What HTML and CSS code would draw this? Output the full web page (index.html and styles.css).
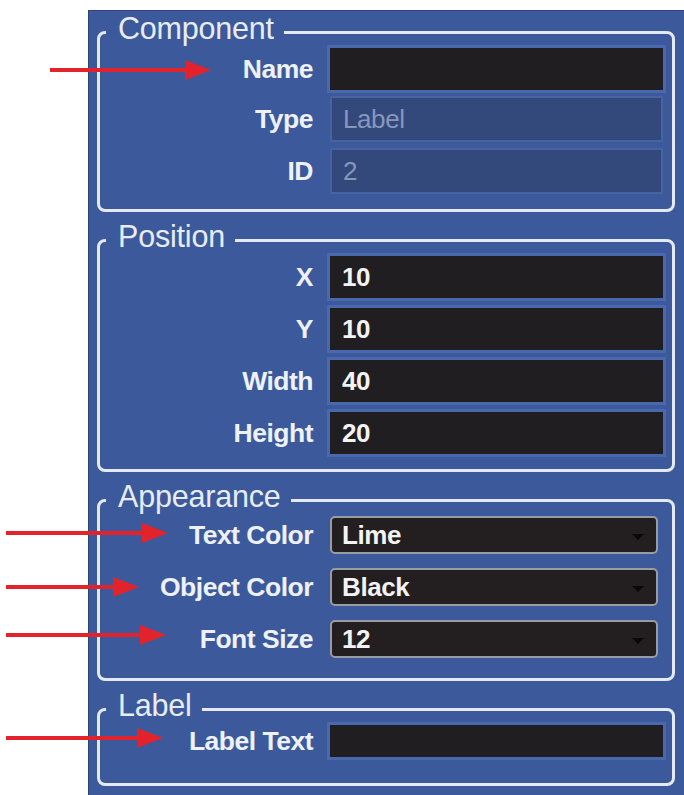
FILE: index.html
```html
<!DOCTYPE html>
<html lang="en">
<head>
    <meta charset="UTF-8">
    <meta name="viewport" content="width=device-width, initial-scale=1.0">
    <title>Properties</title>
    <link rel="stylesheet" href="styles.css">
</head>
<body>
    <div class="props-panel">
        <!-- 组件信息 -->
        <fieldset class="group group-component">
            <legend>Component</legend>
            <div class="field-grid">
                <label class="field-label" for="comp-name">Name</label>
                <input id="comp-name" class="field-input" type="text" value="">
                <label class="field-label" for="comp-type">Type</label>
                <input id="comp-type" class="field-input readonly" type="text" value="Label" readonly>
                <label class="field-label" for="comp-id">ID</label>
                <input id="comp-id" class="field-input readonly" type="text" value="2" readonly>
            </div>
        </fieldset>

        <!-- 位置和尺寸 -->
        <fieldset class="group group-position">
            <legend>Position</legend>
            <div class="field-grid">
                <label class="field-label" for="pos-x">X</label>
                <input id="pos-x" class="field-input" type="text" value="10">
                <label class="field-label" for="pos-y">Y</label>
                <input id="pos-y" class="field-input" type="text" value="10">
                <label class="field-label" for="pos-w">Width</label>
                <input id="pos-w" class="field-input" type="text" value="40">
                <label class="field-label" for="pos-h">Height</label>
                <input id="pos-h" class="field-input" type="text" value="20">
            </div>
        </fieldset>

        <!-- 外观 -->
        <fieldset class="group group-appearance">
            <legend>Appearance</legend>
            <div class="field-grid">
                <label class="field-label" for="text-color">Text Color</label>
                <div class="select-box">
                    <select id="text-color" class="field-select">
                        <option>Lime</option>
                    </select>
                </div>
                <label class="field-label" for="obj-color">Object Color</label>
                <div class="select-box">
                    <select id="obj-color" class="field-select">
                        <option>Black</option>
                    </select>
                </div>
                <label class="field-label" for="font-size">Font Size</label>
                <div class="select-box">
                    <select id="font-size" class="field-select">
                        <option>12</option>
                    </select>
                </div>
            </div>
        </fieldset>

        <!-- 标签文字 -->
        <fieldset class="group group-label">
            <legend>Label</legend>
            <div class="field-grid">
                <label class="field-label" for="label-text">Label Text</label>
                <input id="label-text" class="field-input" type="text" value="">
            </div>
        </fieldset>
    </div>

    <!-- 红色指示箭头 -->
    <svg class="pointer-arrows" width="684" height="795" viewBox="0 0 684 795">
        <g fill="#e3232b">
            <path d="M50 68H185V60L211 70L185 80V72H50Z"/>
            <path d="M6 531H142V523L168 533L142 543V535H6Z"/>
            <path d="M6 585H113V577L139 587L113 597V589H6Z"/>
            <path d="M6 633H140V625L166 635L140 645V637H6Z"/>
            <path d="M6 736H137V728L163 738L137 748V740H6Z"/>
        </g>
    </svg>
</body>
</html>
```

FILE: styles.css
```css
/* 基础样式重置 */
* {
    margin: 0;
    padding: 0;
    box-sizing: border-box;
}

body {
    position: relative;
    height: 795px;
    overflow: hidden;
    background: #fff;
    font-family: "Liberation Sans", Arial, sans-serif;
}

/* 属性面板 */
.props-panel {
    height: calc(100vh - 10px);
    margin: 10px 0 0 88px;
    padding: 7px 9px 0 8px;
    background: #3c5a9b;
    border-top: 1px solid #2c4477;
    border-left: 1px solid #2c4477;
    display: flex;
    flex-direction: column;
    gap: 14px;
}

/* 分组框 */
.group {
    min-width: 0;
    border: 3px solid #e4e9f3;
    border-radius: 8px;
    padding: 2px 9px 15px 0;
}

.group legend {
    margin-left: 6px;
    padding: 0 10px 8px 12px;
    font-size: 30.5px;
    line-height: 20px;
    letter-spacing: -0.2px;
    color: #e8ecf5;
}

.group-appearance {
    padding-bottom: 20px;
}

.group-label {
    padding-bottom: 26px;
}

/* 标签 + 输入框 两列 */
.field-grid {
    display: grid;
    grid-template-columns: 213px 1fr;
    column-gap: 17px;
    row-gap: 10px;
    align-items: center;
}

.group-component .field-grid {
    row-gap: 6px;
}

.group-appearance .field-grid {
    row-gap: 14px;
}

.field-label {
    text-align: right;
    font-size: 26.5px;
    font-weight: bold;
    letter-spacing: -0.5px;
    color: #eef1f7;
}

.field-input {
    width: 100%;
    height: 42px;
    padding: 0 12px;
    border: none;
    outline: none;
    background: #201e20;
    box-shadow: 0 0 0 3px rgba(88, 122, 196, 0.45);
    font-family: inherit;
    font-size: 26px;
    font-weight: bold;
    letter-spacing: -0.4px;
    color: #f3f3f3;
}

.field-input.readonly {
    height: 46px;
    padding: 0 11px;
    border: 2px solid #4764a0;
    background: #34497b;
    box-shadow: none;
    font-weight: normal;
    color: #8797bc;
}

.group-label .field-input {
    height: 32px;
}

/* 下拉框 */
.select-box {
    position: relative;
    margin-right: 5px;
}

.select-box::after {
    content: '';
    position: absolute;
    right: 14px;
    top: 18px;
    border-left: 6px solid transparent;
    border-right: 6px solid transparent;
    border-top: 6px solid #080808;
}

.field-select {
    appearance: none;
    -webkit-appearance: none;
    width: 100%;
    height: 38px;
    padding: 0 10px;
    border: 2px solid #9a9ca3;
    border-radius: 5px;
    outline: none;
    background: #231f20;
    font-family: inherit;
    font-size: 26px;
    font-weight: bold;
    letter-spacing: -0.4px;
    color: #f3f3f3;
}

/* 箭头覆盖层 */
.pointer-arrows {
    position: absolute;
    top: 0;
    left: 0;
    pointer-events: none;
}
```
